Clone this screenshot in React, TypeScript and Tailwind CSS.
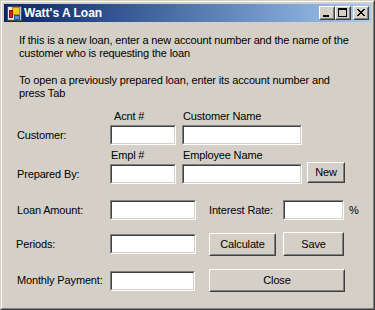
import React from "react";

function TextBox({ w }: { w: string }) {
  return (
    <div className={`${w} h-[20px] shrink-0 border border-t-[#808080] border-l-[#808080] border-r-white border-b-white`}>
      <div className="h-full w-full bg-white border border-t-[#404040] border-l-[#404040] border-r-[#d4d0c8] border-b-[#d4d0c8]" />
    </div>
  );
}

function Btn({ cls, children }: { cls: string; children: React.ReactNode }) {
  return (
    <div className={`${cls} shrink-0 border border-t-white border-l-white border-r-[#404040] border-b-[#404040]`}>
      <div className="h-full w-full border border-t-[#d4d0c8] border-l-[#d4d0c8] border-r-[#808080] border-b-[#808080] flex items-center justify-center text-[11px] leading-[13px] text-black">
        {children}
      </div>
    </div>
  );
}

function CapBtn({ children }: { children: React.ReactNode }) {
  return (
    <div className="w-[16px] h-[14px] bg-[#d4d0c8] border border-t-white border-l-white border-r-[#404040] border-b-[#404040]">
      <div className="h-full w-full border border-t-[#d4d0c8] border-l-[#d4d0c8] border-r-[#808080] border-b-[#808080]">
        <svg width="12" height="10" viewBox="0 0 12 10" shapeRendering="crispEdges" className="block">
          {children}
        </svg>
      </div>
    </div>
  );
}

const xRows = ["11000011", "01100110", "00111100", "00011000", "00111100", "01100110", "11000011"];

function AppIcon() {
  return (
    <svg width="16" height="16" viewBox="0 0 16 16" shapeRendering="crispEdges" className="block">
      <rect x="1" y="1" width="14" height="14" fill="#c8c8d0" stroke="#4a4a5a" strokeWidth="1" />
      <rect x="2" y="2" width="12" height="12" fill="#e8e8f0" />
      <rect x="6" y="2" width="7" height="7" fill="#f8c818" stroke="#c88000" strokeWidth="1" />
      <rect x="3" y="5" width="3" height="7" fill="#d82010" stroke="#901010" strokeWidth="1" />
      <rect x="8" y="10" width="5" height="4" fill="#5a8ae0" stroke="#2850a0" strokeWidth="1" />
    </svg>
  );
}

export default function App() {
  return (
    <div className="w-[375px] h-[310px] border border-t-[#d4d0c8] border-l-[#d4d0c8] border-r-[#404040] border-b-[#404040] bg-[#d4d0c8] font-['Liberation_Sans',Arial,sans-serif]">
      <div className="h-full w-full border border-t-white border-l-white border-r-[#808080] border-b-[#808080] p-[2px] flex flex-col">
        {/* Title bar */}
        <div className="h-[18px] shrink-0 flex items-center bg-linear-to-r from-[#0a246a] to-[#a6caf0] pl-[2px] pr-[2px]">
          <AppIcon />
          <div className="ml-[2px] text-white font-bold text-[12px] leading-[14px]">Watt's A Loan</div>
          <div className="ml-auto flex items-center">
            <CapBtn>
              <rect x="2" y="7" width="6" height="2" fill="black" />
            </CapBtn>
            <CapBtn>
              <rect x="1" y="0" width="9" height="2" fill="black" />
              <rect x="1" y="0" width="1" height="9" fill="black" />
              <rect x="9" y="0" width="1" height="9" fill="black" />
              <rect x="1" y="8" width="9" height="1" fill="black" />
            </CapBtn>
            <div className="w-[2px]" />
            <CapBtn>
              {xRows.map((r, i) =>
                r.split("").map((c, j) =>
                  c === "1" ? <rect key={`${i}-${j}`} x={2 + j} y={1 + i} width="1" height="1" fill="black" /> : null
                )
              )}
            </CapBtn>
          </div>
        </div>

        {/* Client area */}
        <div className="flex-1 bg-[#d4d0c8] pl-[13px] text-[11px] leading-[13px] tracking-[-0.15px] text-black flex flex-col">
          <p className="mt-[12px] ml-[2px]">
            If this is a new loan, enter a new account number and the name of the
            <br />
            customer who is requesting the loan
          </p>
          <p className="mt-[14px] ml-[2px]">
            To open a previously prepared loan, enter its account number and
            <br />
            press Tab
          </p>

          {/* header 1 */}
          <div className="mt-[10px] h-[13px] flex">
            <div className="w-[93px]" />
            <div className="w-[72px] pl-[4px]">Acnt #</div>
            <div className="pl-[1px]">Customer Name</div>
          </div>
          {/* row 1 */}
          <div className="mt-[2px] h-[20px] flex items-center">
            <div className="w-[93px]">Customer:</div>
            <TextBox w="w-[66px]" />
            <div className="w-[6px]" />
            <TextBox w="w-[120px]" />
          </div>

          {/* header 2 */}
          <div className="mt-[4px] h-[13px] flex">
            <div className="w-[93px]" />
            <div className="w-[72px] pl-[1px]">Empl #</div>
            <div className="pl-[1px]">Employee Name</div>
          </div>
          {/* row 2 */}
          <div className="mt-[2px] h-[20px] flex items-center">
            <div className="w-[93px]">Prepared By:</div>
            <TextBox w="w-[66px]" />
            <div className="w-[6px]" />
            <TextBox w="w-[120px]" />
            <div className="w-[5px]" />
            <Btn cls="w-[38px] h-[21px] self-start -mt-[2px]">New</Btn>
          </div>

          {/* row 3 */}
          <div className="mt-[16px] h-[20px] flex items-center">
            <div className="w-[93px]">Loan Amount:</div>
            <TextBox w="w-[86px]" />
            <div className="w-[13px]" />
            <div className="w-[74px]">Interest Rate:</div>
            <TextBox w="w-[61px]" />
            <div className="w-[5px]" />
            <div>%</div>
          </div>

          {/* row 4 */}
          <div className="mt-[12px] h-[24px] flex items-center">
            <div className="w-[92px] -ml-[1px]">Periods:</div>
            <div className="w-[2px]" />
            <TextBox w="w-[86px]" />
            <div className="w-[13px]" />
            <Btn cls="w-[67px] h-[23px]">Calculate</Btn>
            <div className="w-[7px]" />
            <Btn cls="w-[61px] h-[24px]">Save</Btn>
          </div>

          {/* row 5 */}
          <div className="mt-[13px] h-[23px] flex items-center">
            <div className="w-[93px]">Monthly Payment:</div>
            <TextBox w="w-[85px]" />
            <div className="w-[14px]" />
            <Btn cls="w-[136px] h-[23px]">Close</Btn>
          </div>
        </div>
      </div>
    </div>
  );
}
